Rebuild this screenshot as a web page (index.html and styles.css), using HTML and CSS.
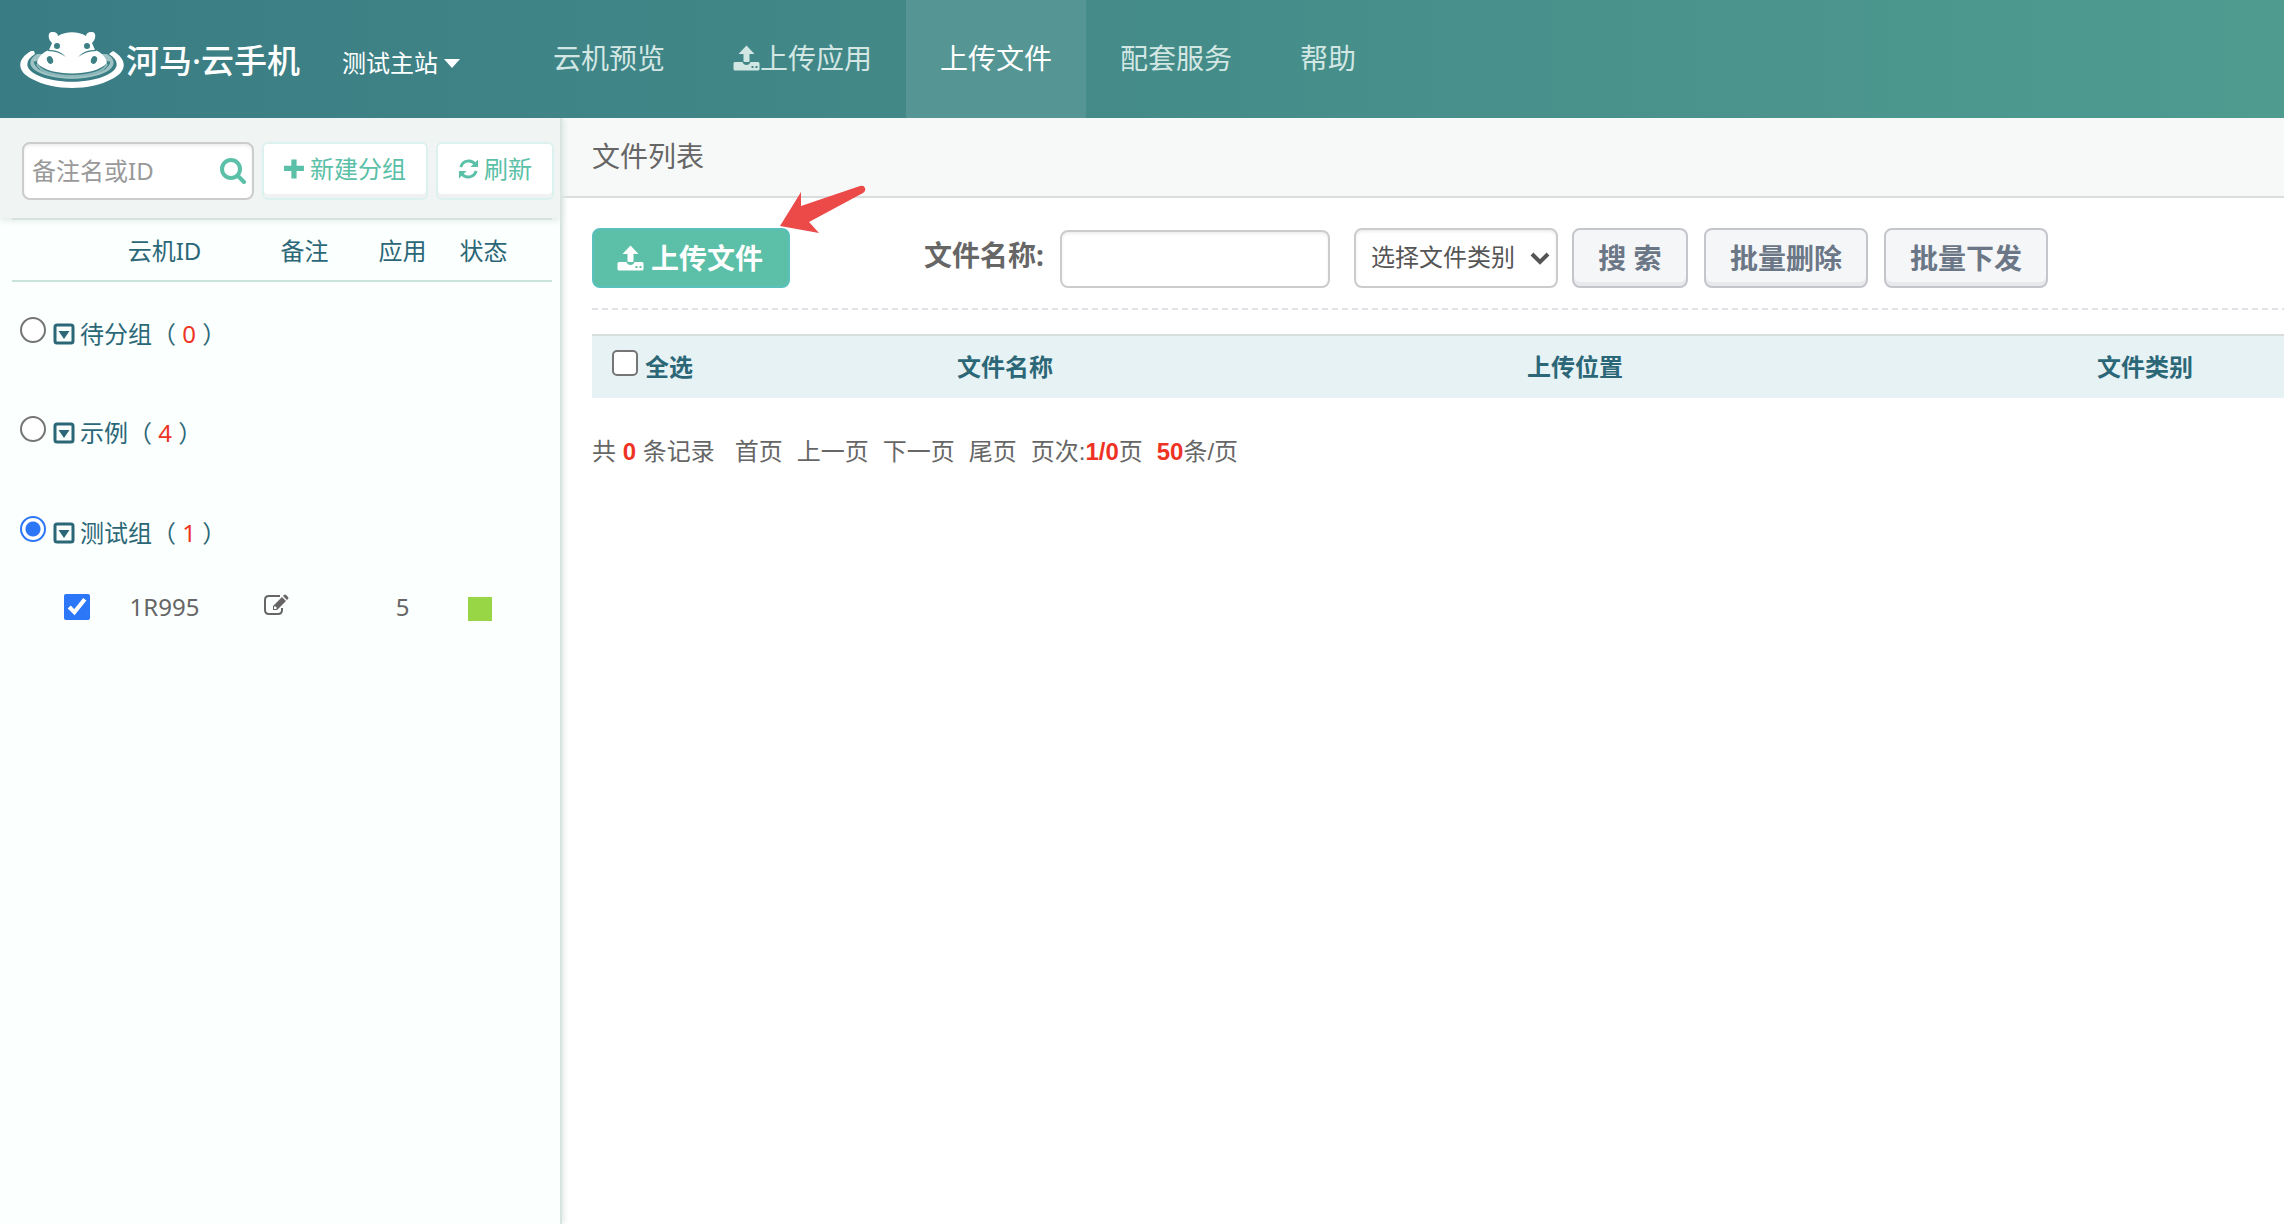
FILE: index.html
```html
<!DOCTYPE html>
<html lang="zh-CN">
<head>
<meta charset="utf-8">
<title>文件列表</title>
<link rel="stylesheet" href="styles.css">
</head>
<body>
<svg class="defs" aria-hidden="true">
  <symbol id="upload" viewBox="0 0 26 26">
    <path fill-rule="evenodd" d="M0 18.500q0-1.500 1.500-1.500h7.500q1 3 4 3t4-3h7.500q1.500 0 1.500 1.500v5.500q0 1.500-1.500 1.500h-23q-1.500 0-1.500-1.500zM18 21v2h2v-2zM22 21v2h2v-2z"/>
    <path d="M13 .500l8 8.500h-5v7q0 1-1 1h-4q-1 0-1-1v-7h-5z"/>
  </symbol>
  <symbol id="group" viewBox="0 0 22 22">
    <rect x="2" y="2" width="18" height="18" rx="2" fill="none" stroke="currentColor" stroke-width="3"/>
    <path d="M5.500 8h11l-5.500 8z"/>
  </symbol>
</svg>

<header class="topbar">
  <a class="brand" href="#">
    <svg class="hippo" viewBox="0 0 104 58" aria-hidden="true">
      <path d="M17 24C8 29 8 37 18 42c17 9 51 9 68 0 10-5 10-13 1-18z" fill="#9fc3c5"/>
      <path d="M17 31c3 16 67 16 70 0" fill="none" stroke="#3c7f85" stroke-width="7"/>
      <path d="M17 34c5 16 65 16 70 0" fill="none" stroke="#8fb9bc" stroke-width="2"/>
      <path d="M11 21C-3 29-4 41 12 49c22 12 58 12 80 0 16-8 15-20 1-28l-4 3c11 7 10 15-2 21-18 9-52 9-70 0-12-6-13-14-2-21l-1-3z"/>
      <path d="M32 13C27 8 28 1 33 2c3 0 5 2 5 4 8-5 20-5 28 0 0-2 2-4 5-4 5-1 6 6 1 11l3 7c6 2 11 7 12 13-12 14-58 14-70 0 1-6 6-11 12-13z"/>
      <g class="hippo-ink"><circle cx="37" cy="16" r="3"/><circle cx="67" cy="16" r="3"/><ellipse cx="30" cy="30" rx="3" ry="4" transform="rotate(-20 30 30)"/><ellipse cx="74" cy="30" rx="3" ry="4" transform="rotate(20 74 30)"/>
      <path d="M28 20q11-1 18 7-8-6-18-6zM76 20q-11-1-18 7 8-6 18-6z"/></g>
    </svg>
    <span class="brand-name">河马·云手机</span>
  </a>
  <button class="site" type="button">测试主站<span class="caret"></span></button>
  <nav class="nav">
    <a href="#">云机预览</a>
    <a href="#"><svg class="nav-icon" aria-hidden="true"><use href="#upload"/></svg>上传应用</a>
    <a href="#" class="active" aria-current="page">上传文件</a>
    <a href="#">配套服务</a>
    <a href="#">帮助</a>
  </nav>
</header>

<div class="layout">
  <aside class="sidebar">
    <form class="side-tools">
      <div class="search">
        <input type="text" placeholder="备注名或ID" aria-label="备注名或ID">
        <button type="submit" aria-label="搜索"><svg viewBox="0 0 26 26" aria-hidden="true"><circle cx="11" cy="11" r="9" fill="none" stroke="currentColor" stroke-width="4"/><path d="M18 18l6 6" stroke="currentColor" stroke-width="4" stroke-linecap="round"/></svg></button>
      </div>
      <button class="side-btn" type="button"><svg viewBox="0 0 20 20" aria-hidden="true"><path d="M7 1h5v6h7v5h-7v7h-5v-7h-7v-5h7z"/></svg>新建分组</button>
      <button class="side-btn" type="button"><svg viewBox="0 0 22 22" aria-hidden="true"><path d="M3 9A8.500 8.500 0 0 1 18 6M19 13A8.500 8.500 0 0 1 4 16" fill="none" stroke="currentColor" stroke-width="3"/><path d="M21 1v8h-8zM1 21v-8h8z"/></svg>刷新</button>
    </form>
    <div class="side-body">
      <table class="devices">
        <colgroup><col class="c-check"><col class="c-id"><col class="c-note"><col class="c-app"><col class="c-state"></colgroup>
        <thead><tr><td></td><th>云机ID</th><th>备注</th><th>应用</th><th class="state">状态</th></tr></thead>
        <tbody>
          <tr class="group"><td colspan="5"><label><input type="radio" name="group"><svg aria-hidden="true"><use href="#group"/></svg><span>待分组（ <b>0</b> ）</span></label></td></tr>
          <tr class="group"><td colspan="5"><label><input type="radio" name="group"><svg aria-hidden="true"><use href="#group"/></svg><span>示例（ <b>4</b> ）</span></label></td></tr>
          <tr class="group"><td colspan="5"><label><input type="radio" name="group" checked><svg aria-hidden="true"><use href="#group"/></svg><span>测试组（ <b>1</b> ）</span></label></td></tr>
          <tr class="device">
            <td class="pick"><input type="checkbox" checked aria-label="选择 1R995"></td>
            <td>1R995</td>
            <td class="note"><button type="button" aria-label="编辑备注"><svg viewBox="0 0 26 22" aria-hidden="true"><path d="M17 2H6Q2 2 2 6v10q0 4 4 4h9q4 0 4-4v-2" fill="none" stroke="currentColor" stroke-width="2"/><path fill-rule="evenodd" d="M10 12l9-9 4 4-9 9h-4zM11 13v2h2l1-1-2-2zM20 2l1-1q1-1 2 0l2 2q1 1 0 2l-1 1z"/></svg></button></td>
            <td>5</td>
            <td class="light"><span class="online"></span></td>
          </tr>
        </tbody>
      </table>
    </div>
  </aside>

  <main class="content">
    <h1>文件列表</h1>
    <div class="panel">
      <form class="filters">
        <div class="upload-wrap">
          <button class="upload" type="button"><svg aria-hidden="true"><use href="#upload"/></svg>上传文件</button>
          <svg class="pointer" viewBox="0 0 88 48" aria-hidden="true"><path d="M1 41L22 7v14L81 1q4-1 5 2t-2 5L30 37l10 11z"/></svg>
        </div>
        <label for="fname">文件名称:</label>
        <input id="fname" class="field" type="text">
        <div class="select">
          <select aria-label="选择文件类别"><option>选择文件类别</option></select>
          <svg viewBox="0 0 20 14" aria-hidden="true"><path d="M2 3l8 8 8-8" fill="none" stroke="currentColor" stroke-width="4"/></svg>
        </div>
        <div class="actions">
          <button class="btn" type="submit">搜 索</button>
          <button class="btn" type="button">批量删除</button>
          <button class="btn" type="button">批量下发</button>
        </div>
      </form>
      <div class="table-scroll">
        <table class="files">
          <colgroup><col class="f-check"><col><col><col></colgroup>
          <thead><tr><th class="all"><label><input type="checkbox"><span>全选</span></label></th><th>文件名称</th><th>上传位置</th><th>文件类别</th></tr></thead>
        </table>
      </div>
      <div class="pager">
        <span>共 <b>0</b> 条记录</span>
        <nav aria-label="分页"><a href="#">首页</a><a href="#">上一页</a><a href="#">下一页</a><a href="#">尾页</a></nav>
        <span>页次:<b>1/0</b>页</span>
        <span><b>50</b>条/页</span>
      </div>
    </div>
  </main>
</div>
</body>
</html>
```
FILE: styles.css
```css
* { box-sizing: border-box; }
body {
  margin: 0;
  min-height: 100vh;
  display: flex;
  flex-direction: column;
  overflow-x: hidden;
  background: #fff;
  color: #666;
  font: 24px/36px "Noto Sans", "Noto Sans CJK SC", sans-serif;
}
button, input, select { font: inherit; color: inherit; margin: 0; }
button { padding: 0; border: 0; background: none; cursor: pointer; }
a { color: inherit; text-decoration: none; }
svg { fill: currentColor; flex: none; }
.defs { position: absolute; width: 0; height: 0; }

.topbar {
  position: relative;
  z-index: 1;
  display: flex;
  align-items: center;
  height: 118px;
  color: #fff;
  background: linear-gradient(90deg, #3a7c84 0, #438a88 45%, #4f9b90 100%);
}
.brand { display: flex; align-items: center; gap: 2px; margin-left: 20px; width: 322px; }
.hippo { width: 104px; height: 58px; }
.hippo-ink { fill: #3c7f85; }
.brand-name { font: 500 33px/48px "Noto Sans", "Noto Sans CJK SC", sans-serif; padding-top: 4px; white-space: nowrap; }
.site { display: flex; align-items: center; gap: 6px; width: 177px; padding-top: 8px; }
.caret { border: 8px solid transparent; border-top: 9px solid #fff; border-bottom: 0; }
.nav { display: flex; align-self: stretch; }
.nav a {
  display: flex;
  align-items: center;
  padding: 0 34px 2px;
  font-size: 28px;
  color: #d2e7e3;
}
.nav a.active { background: #559694; color: #fff; }
.nav-icon { width: 27px; height: 26px; }

.layout { flex: 1; display: grid; grid-template-columns: 562px minmax(0, 1fr); }
.sidebar {
  position: relative;
  background: #fbfffe;
  border-right: 2px solid #d8e4e1;
  box-shadow: 2px 0 6px #dfe9e7;
}
.side-tools {
  display: flex;
  gap: 8px;
  padding: 24px 6px 18px 22px;
  background: #f0f4f3;
  box-shadow: 0 2px 6px #dde7e4;
}
.search {
  flex: 1;
  min-width: 0;
  display: flex;
  align-items: center;
  height: 58px;
  padding: 0 6px 0 8px;
  border: 2px solid #ccc;
  border-radius: 8px;
  background: #fff;
  box-shadow: inset 0 2px 3px #eee;
}
.search input { flex: 1; min-width: 0; padding: 0; border: 0; outline: 0; background: none; }
.search input::placeholder { color: #999; opacity: 1; }
.search button { color: #5ac0a7; line-height: 0; }
.search svg { width: 26px; height: 26px; }
.side-btn {
  display: flex;
  align-items: center;
  gap: 5px;
  height: 58px;
  padding: 0 20px 4px;
  border: 2px solid #dcf2ee;
  border-radius: 6px;
  background: #fff;
  box-shadow: inset 0 -4px #f0f1f1;
  color: #5ac0a7;
}
.side-btn svg { width: 21px; height: 22px; }
.side-body { padding: 0 8px 0 12px; }
.devices { width: 100%; table-layout: fixed; border-collapse: collapse; }
.devices td, .devices th { padding: 0; text-align: center; font-weight: normal; }
.devices thead { border-top: 2px solid #d5e2df; border-bottom: 2px solid #c8e3dc; color: #2b6777; }
.devices thead tr { height: 62px; }
.devices thead th { padding-top: 2px; }
.c-check { width: 82px; }
.c-id { width: 141px; }
.c-note { width: 139px; }
.c-app { width: 57px; }
.c-state { width: 121px; }
.devices .state { padding-right: 16px; }
.devices .light { padding-right: 24px; }
.group { height: 100px; color: #2b6777; }
.devices .group td { padding: 4px 0 0 8px; text-align: left; }
.group label { display: flex; align-items: center; }
.group svg { width: 22px; height: 22px; margin: 0 5px 0 7px; }
b { color: #ee3324; }
.group b { font-weight: normal; }
input[type="radio"], input[type="checkbox"] { width: 26px; height: 26px; accent-color: #2b77f8; }
input[type="radio"] {
  appearance: none;
  border: 2px solid #757575;
  border-radius: 50%;
  background: #fff;
}
input[type="radio"]:checked {
  border-color: #2b77f8;
  background: radial-gradient(circle, #2b77f8 0 7px, #fff 8px);
}
input[type="checkbox"]:not(:checked) {
  appearance: none;
  border: 2px solid #757575;
  border-radius: 5px;
  background: #fff;
}
.group input { margin-bottom: 8px; }
.device { height: 52px; }
.devices .pick { text-align: left; padding-left: 52px; line-height: 0; }
.devices .note { text-align: left; padding-left: 28px; }
.note svg { width: 26px; height: 22px; display: block; }
.online { display: block; width: 24px; height: 24px; margin: 4px auto 0; background: #99d645; }

.content { min-width: 0; }
h1 {
  margin: 0;
  height: 80px;
  padding: 16px 30px;
  border-bottom: 2px solid #dadddd;
  background: #f7f9f8;
  font-size: 28px;
  font-weight: normal;
  line-height: 44px;
}
.panel { padding: 30px 0 0 30px; }
.filters { display: flex; align-items: center; padding-bottom: 22px; font-size: 28px;
  background: repeating-linear-gradient(90deg, #dfe3e8 0 6px, transparent 6px 10px) bottom / 100% 2px no-repeat; }
.upload-wrap { position: relative; margin-right: 134px; }
.upload {
  display: flex;
  align-items: center;
  gap: 7px;
  height: 60px;
  padding: 0 25px 0 23px;
  border: 2px solid #59c0bb;
  border-radius: 8px;
  background: #5bc0a7;
  color: #fff;
  font-weight: bold;
}
.upload svg { width: 27px; height: 26px; }
.pointer { position: absolute; left: 187px; top: -43px; width: 88px; height: 48px; color: #ec4a49; }
.filters label { font-weight: bold; margin-right: 16px; padding-bottom: 6px; white-space: nowrap; }
.field, .select select { border: 2px solid #ccc; border-radius: 8px; background: #fff; box-shadow: inset 0 2px 3px #eee; }
.field { align-self: flex-end; width: 270px; height: 58px; padding: 0 10px; margin-right: 24px; }
.select { display: grid; align-items: center; margin-right: 14px; font-size: 24px; color: #555; }
.select select, .select svg { grid-area: 1 / 1; }
.select select { appearance: none; width: 204px; height: 60px; padding: 0 0 2px 15px; }
.select svg { width: 20px; height: 14px; justify-self: end; margin-right: 8px; pointer-events: none; }
.actions { display: flex; gap: 16px; }
.btn {
  min-width: 116px;
  height: 60px;
  padding: 0 24px;
  border: 2px solid #c4c6cb;
  border-radius: 8px;
  background: #f5f6f8;
  box-shadow: inset 0 -4px #e8e9ec;
  color: #6b7686;
  font-weight: bold;
  white-space: nowrap;
}
.table-scroll { margin-top: 24px; overflow: hidden; }
.files { width: 100%; min-width: 1838px; table-layout: fixed; border-collapse: collapse; }
.files thead { background: #e7f2f4; color: #2b6777; border-top: 2px solid #d7dddc; }
.files tr { height: 63px; }
.files th { padding: 0; }
.f-check { width: 128px; }
.all label { display: flex; align-items: center; gap: 7px; padding-left: 20px; }
.all input { margin-bottom: 8px; }
.pager {
  display: flex;
  gap: 14px;
  margin-top: 36px;
  font-family: "Liberation Sans", "Noto Sans CJK SC", sans-serif;
  white-space: nowrap;
}
.pager nav { display: flex; gap: 14px; margin-left: 6px; }
```
